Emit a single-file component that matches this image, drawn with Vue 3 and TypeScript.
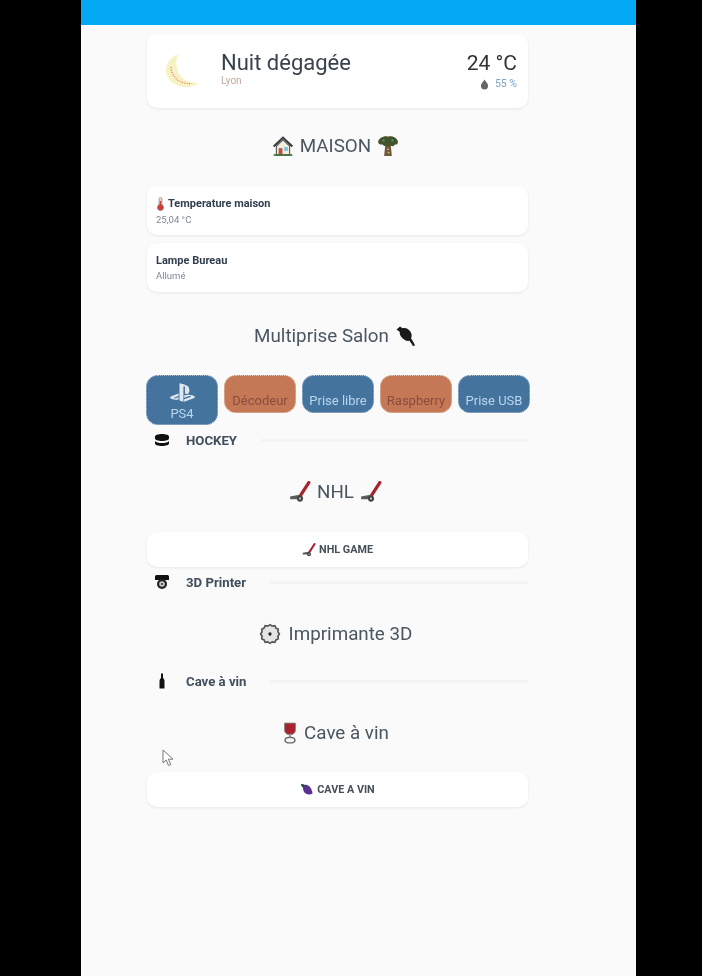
<template>
  <div class="screen">
    <div class="phone">
      <header class="topbar"></header>

      <main class="column">
        <section class="card weather">
          <svg class="moon" viewBox="0 0 36 36">
            <path d="M12 1C4 5 0 14 3 22c4 10 21 15 32 7-11 0-20-5-22-14-1-5-1-10 1-14z" fill="#f7f2c4" />
            <path d="M7 13c0 7 5 13 10 15 3 1 6 2 11 1.500" fill="none" stroke="#d0705a" stroke-width="1.100" stroke-dasharray="1 1.500" />
          </svg>
          <div class="weather-main">
            <div class="weather-title">Nuit dégagée</div>
            <div class="weather-city">Lyon</div>
          </div>
          <div class="weather-side">
            <div class="weather-temp">24 °C</div>
            <div class="weather-humidity">
              <svg class="drop" viewBox="0 0 10 12">
                <path d="M5 .5C4 2.500 1 5 1 7.500a4 4 0 0 0 8 0C9 5 6 2.500 5 .5z" fill="#666" />
              </svg>
              <span>55 %</span>
            </div>
          </div>
        </section>

        <h2 class="heading mt-25">
          <svg class="emoji" viewBox="0 0 20 20">
            <path d="M1.500 10.500 10 2.500l8.500 8" fill="none" stroke="#3d3d3d" stroke-width="2" />
            <path d="M4 10l6-5.500 6 5.500v8H4z" fill="#f3ede0" stroke="#555" />
            <rect x="6" y="12" width="3.500" height="6" fill="#b5533f" />
            <rect x="11" y="11" width="3.500" height="3.500" fill="#7cc4e8" />
            <rect x="1.500" y="17.500" width="17" height="1.500" fill="#3f6b38" />
          </svg>
          <span>MAISON</span>
          <svg class="emoji" viewBox="0 0 20 20">
            <path d="M7.500 9h5l1 10h-7z" fill="#6f5a3c" />
            <path d="M1 6c1-4 7-5.500 9-4.500 3-1 8 .5 9 4.500 0 2-1 3.500-2.500 2.500-1 2-3 2-4 1-1 1.500-3 1.500-4 0-2 1-3 0-3.500-1C3 9.500 1 8 1 6z" fill="#46522a" />
            <circle cx="6" cy="5" r="1" fill="#2ab0a0" />
            <circle cx="14" cy="5" r="1" fill="#2ab0a0" />
            <circle cx="10" cy="13" r=".8" fill="#d6c26a" />
            <circle cx="10.500" cy="16" r=".8" fill="#d6c26a" />
          </svg>
        </h2>

        <section class="card entity mt-29">
          <div class="entity-name">
            <svg class="thermo" viewBox="0 0 8 14">
              <rect x="2.500" y=".5" width="3" height="9" rx="1.500" fill="#e8d8c8" stroke="#777" stroke-width=".6" />
              <rect x="3.300" y="4" width="1.400" height="6" fill="#d43c30" />
              <circle cx="4" cy="10.500" r="3" fill="#d43c30" stroke="#777" stroke-width=".6" />
            </svg>
            <span>Temperature maison</span>
          </div>
          <div class="entity-state">25,04 °C</div>
        </section>
        <section class="card entity mt-8">
          <div class="entity-name">Lampe Bureau</div>
          <div class="entity-state">Allumé</div>
        </section>

        <h2 class="heading mt-31">
          <span>Multiprise Salon</span>
          <svg class="emoji" viewBox="0 0 22 22">
            <path d="M1.500 4.500 5 1.500l2.500 1.800c3-1 6 .5 8 3.500 1.500 2.500 1.500 4.500.5 6.500l1 1.500c1 1.500 2 3.500 3 5.500l-2 1c-1-2-2-3.500-3.500-5.500-2.500.5-5-.5-7-2.500-2-2-3-4-2.800-6.500z" fill="#1a1a1a" />
          </svg>
        </h2>

        <div class="switches">
          <button
            v-for="item in switches"
            :key="item.label"
            class="switch"
            :class="item.on ? 'switch-on' : 'switch-off'"
          >
            <svg v-if="item.logo" class="ps-logo" viewBox="0 0 24 24">
              <path d="M9.500 4.270C10.880 4.530 12.900 5.140 14 5.500C16.750 6.450 17.690 7.630 17.690 10.290C17.690 12.890 16.090 13.880 14.050 12.890V8.050C14.050 7.500 13.950 6.970 13.410 6.820C13 6.690 12.760 7.070 12.760 7.630V19.730L9.500 18.690V4.270M13.370 17.620L18.620 15.750C19.220 15.540 19.310 15.240 18.830 15.080C18.340 14.920 17.470 14.970 16.870 15.180L13.370 16.410V14.450L13.670 14.350C13.670 14.350 14.680 14 16.120 13.830C17.560 13.670 19.320 13.850 20.710 14.380C22.270 14.880 22.440 15.610 22.040 16.110C21.640 16.610 20.660 16.970 20.660 16.970L13.370 19.590V17.620M3.270 17.420C1.660 17 1.390 16.050 2.120 15.500C2.810 15 3.970 14.610 3.970 14.610L8.690 12.930V14.840L5.280 16.060C4.690 16.270 4.590 16.570 5.070 16.730C5.560 16.890 6.430 16.840 7.030 16.630L8.690 16.030V17.740L8.360 17.790C6.700 18.060 4.940 17.950 3.270 17.420Z" fill="#dfe8f0" />
            </svg>
            <span>{{ item.label }}</span>
          </button>
        </div>

        <div class="divider-row mt-5">
          <svg class="row-icon" viewBox="0 0 16 16">
            <path d="M1 4.500C1 3 4 2 8 2s7 1 7 2.500v2C15 8 12 9 8 9S1 8 1 6.500z" fill="#111" />
            <path d="M1 9c1 1.500 4 2 7 2s6-.5 7-2v2.500C15 13 12 14 8 14s-7-1-7-2.500z" fill="#111" />
          </svg>
          <span class="row-label">HOCKEY</span>
          <span class="row-line"></span>
        </div>

        <h2 class="heading mt-29">
          <svg class="emoji" viewBox="0 0 20 20"><use href="#stick" /></svg>
          <span>NHL</span>
          <svg class="emoji" viewBox="0 0 20 20"><use href="#stick" /></svg>
        </h2>

        <section class="card action mt-29">
          <svg class="action-icon" viewBox="0 0 20 20"><use href="#stick" /></svg>
          <span>NHL GAME</span>
        </section>

        <div class="divider-row mt-5">
          <svg class="row-icon" viewBox="0 0 16 16">
            <path d="M1 2.500C1 1.500 2 1 3 1h10c1 0 2 .5 2 1.500V6H1z" fill="#111" />
            <circle cx="8" cy="10" r="5" fill="#222" />
            <circle cx="8" cy="10" r="2.800" fill="#c8c8c8" />
            <circle cx="8" cy="10" r="1" fill="#333" />
          </svg>
          <span class="row-label">3D Printer</span>
          <span class="row-line"></span>
        </div>

        <h2 class="heading heading-wide mt-29">
          <svg class="emoji" viewBox="0 0 20 20">
            <path d="M10 1.500l2 1.300 2.400-.3 1 2.100 2.100 1-.3 2.400 1.300 2-1.300 2 .3 2.400-2.100 1-1 2.100-2.400-.3-2 1.300-2-1.300-2.400.3-1-2.100-2.100-1 .3-2.400-1.300-2 1.300-2-.3-2.400 2.100-1 1-2.100 2.400.3z" fill="#e4e4e4" stroke="#555" stroke-width="1.500" />
            <circle cx="10" cy="10" r="1.500" fill="#222" />
          </svg>
          <span>Imprimante 3D</span>
        </h2>

        <div class="divider-row mt-26">
          <svg class="row-icon" viewBox="0 0 16 16">
            <path d="M7 .5h2v4c0 1 1.500 1.500 1.500 3.500v7.500h-5V8C5.500 6 7 5.500 7 4.500z" fill="#111" />
          </svg>
          <span class="row-label">Cave à vin</span>
          <span class="row-line"></span>
        </div>

        <h2 class="heading mt-29">
          <svg class="emoji emoji-narrow" viewBox="3 0 14 20">
            <path d="M5 1h10v6c0 3-2 4.500-5 4.500S5 10 5 7z" fill="#a8232f" stroke="#888" stroke-width=".8" />
            <rect x="9" y="11" width="2" height="4" fill="#999" />
            <ellipse cx="10" cy="16.500" rx="4.500" ry="2.500" fill="#f4f4f4" stroke="#666" stroke-width="1.300" />
          </svg>
          <span>Cave à vin</span>
        </h2>

        <section class="card action mt-28">
          <svg class="action-icon" viewBox="0 0 20 20">
            <path d="M4 5c1-2 4-3 6-2 4 1 7 6 8 12-3 2-7 2-10 0C5 13 4 9 4 5z" fill="#5a3190" />
            <path d="M1 1l5 1 1 3-4 1z" fill="#1d4a3a" />
          </svg>
          <span>CAVE A VIN</span>
        </section>
      </main>

      <svg class="cursor" viewBox="0 0 12 18">
        <path d="M1 1v13l3.200-3 2.300 5.500 2.200-1-2.300-5.300H11z" fill="#fff" stroke="#777" stroke-width="1" />
      </svg>
    </div>

    <svg class="symbols">
      <symbol id="stick" viewBox="0 0 20 20">
        <path d="M18 1.500 10.500 13" stroke="#a8232f" stroke-width="3" stroke-linecap="round" />
        <path d="M10.500 12.500 8.500 16.500H1v-2.500L7 13z" fill="#5c5c5c" />
        <circle cx="10" cy="16" r="2.800" fill="#444" />
        <circle cx="10" cy="16" r="1" fill="#c4c4c4" />
      </symbol>
    </svg>
  </div>
</template>

<script setup lang="ts">
interface SwitchItem {
  label: string
  on: boolean
  logo?: boolean
}

const switches: SwitchItem[] = [
  { label: 'PS4', on: false, logo: true },
  { label: 'Décodeur', on: true },
  { label: 'Prise libre', on: false },
  { label: 'Raspberry', on: true },
  { label: 'Prise USB', on: false },
]
</script>

<style>
html,
body {
  margin: 0;
  background: #000;
}
</style>

<style scoped>
.screen {
  width: 702px;
  height: 976px;
  background: #000;
  overflow: hidden;
  font-family: Roboto, "Liberation Sans", sans-serif;
}

.phone {
  position: relative;
  width: 555px;
  height: 976px;
  margin-left: 81px;
  background: #fafafa;
  filter: blur(0.6px);
}

.topbar {
  height: 25px;
  background: #03a9f4;
}

.column {
  display: flex;
  flex-direction: column;
  width: 381px;
  margin-left: 66px;
  padding-top: 9px;
}

.card {
  box-sizing: border-box;
  background: #fff;
  border-radius: 10px;
  box-shadow: 0 1px 3px rgba(0, 0, 0, 0.08);
}

.weather {
  display: flex;
  align-items: flex-start;
  height: 74px;
  padding: 16px 11px 0 17px;
}

.moon {
  width: 36px;
  height: 36px;
  margin-top: 4px;
  flex: none;
}

.weather-main {
  margin-left: 21px;
  flex: 1;
}

.weather-title {
  font-size: 22px;
  line-height: 26px;
  color: #37424c;
}

.weather-city {
  font-size: 10px;
  line-height: 12px;
  margin-top: -1px;
  color: #c4a79c;
}

.weather-side {
  text-align: right;
}

.weather-temp {
  font-size: 21px;
  line-height: 26px;
  color: #333;
}

.weather-humidity {
  display: flex;
  justify-content: flex-end;
  align-items: center;
  gap: 6px;
  margin-top: 2px;
  font-size: 10.5px;
  line-height: 12px;
  color: #7fa4c4;
}

.drop {
  width: 9px;
  height: 11px;
}

.heading {
  box-sizing: border-box;
  display: flex;
  justify-content: center;
  align-items: center;
  gap: 6px;
  height: 24px;
  margin-bottom: 0;
  margin-left: 0;
  margin-right: 0;
  padding: 2px 4px 0 0;
  font-size: 18.8px;
  font-weight: 400;
  color: #4a5661;
}

.heading-wide {
  gap: 8px;
}

.emoji {
  width: 22px;
  height: 22px;
  flex: none;
}

.emoji-narrow {
  width: 16px;
}

.entity {
  display: flex;
  flex-direction: column;
  justify-content: center;
  gap: 3px;
  height: 49px;
  padding: 0 9px;
}

.entity-name {
  display: flex;
  align-items: center;
  gap: 3px;
  font-size: 11px;
  font-weight: 700;
  line-height: 12px;
  color: #2f3d4c;
}

.thermo {
  width: 9px;
  height: 14px;
}

.entity-state {
  font-size: 9.5px;
  line-height: 11px;
  color: #7d8894;
}

.switches {
  display: flex;
  gap: 6px;
  align-items: flex-start;
  width: 384px;
  margin-left: -1px;
  margin-top: 28px;
}

.switch {
  display: flex;
  flex-direction: column;
  align-items: center;
  justify-content: flex-end;
  width: 72px;
  height: 38px;
  padding: 0 0 4px;
  border: 1px dotted rgba(255, 255, 255, 0.6);
  border-radius: 12px;
  font-family: inherit;
  font-size: 13px;
  line-height: 14px;
  white-space: nowrap;
}

.switch:first-child {
  height: 50px;
  padding-bottom: 3px;
}

.switch-off {
  background: #44739e;
  color: #b9d6ee;
}

.switch-on {
  background: #c57855;
  color: #8c4b3e;
}

.ps-logo {
  width: 29px;
  height: 29px;
}

.divider-row {
  display: flex;
  align-items: center;
  height: 20px;
}

.row-icon {
  width: 16px;
  height: 16px;
  margin-left: 7px;
  flex: none;
}

.row-label {
  margin-left: 16px;
  font-size: 13.2px;
  font-weight: 700;
  white-space: nowrap;
  color: #3f4d5c;
}

.row-line {
  flex: 1;
  height: 3px;
  margin-left: 24px;
  background: #f4f4f4;
}

.action {
  display: flex;
  justify-content: center;
  align-items: center;
  gap: 3px;
  height: 35px;
  font-size: 10.8px;
  font-weight: 700;
  color: #454f5a;
}

.action-icon {
  width: 14px;
  height: 14px;
}

.cursor {
  position: absolute;
  left: 81px;
  top: 749px;
  width: 12px;
  height: 18px;
}

.symbols {
  display: none;
}

.mt-5 { margin-top: 5px; }
.mt-8 { margin-top: 8px; }
.mt-25 { margin-top: 25px; }
.mt-26 { margin-top: 26px; }
.mt-28 { margin-top: 28px; }
.mt-29 { margin-top: 29px; }
.mt-31 { margin-top: 31px; }
</style>
